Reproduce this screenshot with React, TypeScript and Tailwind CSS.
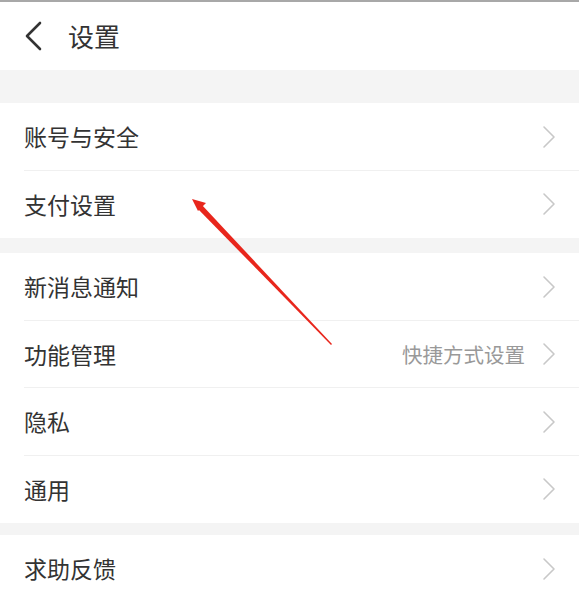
const groups = [
  [{ label: "账号与安全" }, { label: "支付设置" }],
  [
    { label: "新消息通知" },
    { label: "功能管理", extra: "快捷方式设置" },
    { label: "隐私" },
    { label: "通用" },
  ],
  [{ label: "求助反馈" }],
];

const Chevron = () => (
  <svg width="14" height="24" viewBox="0 0 14 24" fill="none">
    <polyline points="2,2 12,12 2,22" stroke="#c8c8c8" strokeWidth="1.6" strokeLinecap="round" strokeLinejoin="round" />
  </svg>
);

const Row = ({ label, extra, last }: { label: string; extra?: string; last: boolean }) => (
  <div className="relative flex items-center h-[67.5px] pl-6 pr-[23px] bg-white">
    <span className="flex-1 text-[23px] text-[#333] leading-none">{label}</span>
    {extra && <span className="text-[20.5px] text-[#999] mr-[17px] leading-none">{extra}</span>}
    <Chevron />
    {!last && <div className="absolute left-6 right-0 bottom-0 h-px bg-[#f0f0f0]" />}
  </div>
);

export default function App() {
  return (
    <div
      className="relative w-[579px] h-[600px] overflow-hidden bg-white"
      style={{ fontFamily: '"Noto Sans CJK SC", "Noto Sans", sans-serif' }}
    >
      <div className="h-[2px] bg-[#a8a8a8]" />
      <header className="flex items-center h-[68px] bg-white">
        <svg width="20" height="32" viewBox="0 0 20 32" fill="none" className="ml-[23px]">
          <polyline points="17,3 4,16 17,29" stroke="#333" strokeWidth="2.6" strokeLinecap="round" strokeLinejoin="round" />
        </svg>
        <span className="ml-[25px] text-[26px] text-[#333] leading-none">设置</span>
      </header>
      <div className="h-[33px] bg-[#f4f4f4]" />
      {groups.map((g, gi) => (
        <div key={gi}>
          {gi > 0 && <div className={gi === 1 ? "h-[15px] bg-[#f4f4f4]" : "h-[12px] bg-[#f4f4f4]"} />}
          {g.map((item, i) => (
            <Row key={item.label} label={item.label} extra={item.extra} last={i === g.length - 1} />
          ))}
        </div>
      ))}
      <svg className="absolute inset-0 pointer-events-none" width="579" height="600">
        <polygon points="332,344 331,345 197,208 201,204" fill="#e8261c" />
        <polygon points="192,199 206,203 198,211" fill="#e8261c" />
      </svg>
    </div>
  );
}
